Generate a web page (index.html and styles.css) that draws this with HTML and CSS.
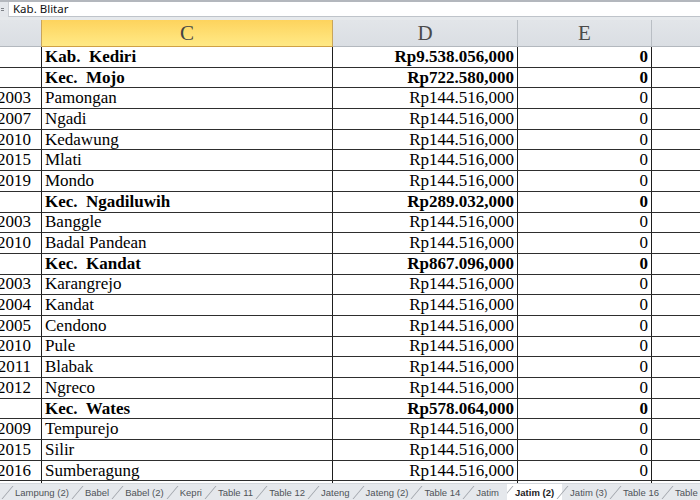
FILE: index.html
```html
<!DOCTYPE html>
<html>
<head>
<meta charset="utf-8">
<link rel="stylesheet" href="styles.css">
</head>
<body>
<div class="app">
  <div class="formula">
    <div class="fx-stub"><span class="fx-mark"></span></div>
    <div class="fbox">Kab. Blitar</div>
  </div>
  <div class="gap"></div>
  <div class="colheads">
    <div class="ch chb"></div>
    <div class="ch chc sel">C</div>
    <div class="ch chd">D</div>
    <div class="ch che">E</div>
    <div class="ch chf"></div>
  </div>
  <div class="sheet">
    <div class="row bold"><div class="cell b"></div><div class="cell c">Kab.&nbsp; Kediri</div><div class="cell d">Rp9.538.056,000</div><div class="cell e">0</div><div class="cell f"></div></div>
    <div class="row bold"><div class="cell b"></div><div class="cell c">Kec.&nbsp; Mojo</div><div class="cell d">Rp722.580,000</div><div class="cell e">0</div><div class="cell f"></div></div>
    <div class="row"><div class="cell b">2003</div><div class="cell c">Pamongan</div><div class="cell d">Rp144.516,000</div><div class="cell e">0</div><div class="cell f"></div></div>
    <div class="row"><div class="cell b">2007</div><div class="cell c">Ngadi</div><div class="cell d">Rp144.516,000</div><div class="cell e">0</div><div class="cell f"></div></div>
    <div class="row"><div class="cell b">2010</div><div class="cell c">Kedawung</div><div class="cell d">Rp144.516,000</div><div class="cell e">0</div><div class="cell f"></div></div>
    <div class="row"><div class="cell b">2015</div><div class="cell c">Mlati</div><div class="cell d">Rp144.516,000</div><div class="cell e">0</div><div class="cell f"></div></div>
    <div class="row"><div class="cell b">2019</div><div class="cell c">Mondo</div><div class="cell d">Rp144.516,000</div><div class="cell e">0</div><div class="cell f"></div></div>
    <div class="row bold"><div class="cell b"></div><div class="cell c">Kec.&nbsp; Ngadiluwih</div><div class="cell d">Rp289.032,000</div><div class="cell e">0</div><div class="cell f"></div></div>
    <div class="row"><div class="cell b">2003</div><div class="cell c">Banggle</div><div class="cell d">Rp144.516,000</div><div class="cell e">0</div><div class="cell f"></div></div>
    <div class="row"><div class="cell b">2010</div><div class="cell c">Badal Pandean</div><div class="cell d">Rp144.516,000</div><div class="cell e">0</div><div class="cell f"></div></div>
    <div class="row bold"><div class="cell b"></div><div class="cell c">Kec.&nbsp; Kandat</div><div class="cell d">Rp867.096,000</div><div class="cell e">0</div><div class="cell f"></div></div>
    <div class="row"><div class="cell b">2003</div><div class="cell c">Karangrejo</div><div class="cell d">Rp144.516,000</div><div class="cell e">0</div><div class="cell f"></div></div>
    <div class="row"><div class="cell b">2004</div><div class="cell c">Kandat</div><div class="cell d">Rp144.516,000</div><div class="cell e">0</div><div class="cell f"></div></div>
    <div class="row"><div class="cell b">2005</div><div class="cell c">Cendono</div><div class="cell d">Rp144.516,000</div><div class="cell e">0</div><div class="cell f"></div></div>
    <div class="row"><div class="cell b">2010</div><div class="cell c">Pule</div><div class="cell d">Rp144.516,000</div><div class="cell e">0</div><div class="cell f"></div></div>
    <div class="row"><div class="cell b">2011</div><div class="cell c">Blabak</div><div class="cell d">Rp144.516,000</div><div class="cell e">0</div><div class="cell f"></div></div>
    <div class="row"><div class="cell b">2012</div><div class="cell c">Ngreco</div><div class="cell d">Rp144.516,000</div><div class="cell e">0</div><div class="cell f"></div></div>
    <div class="row bold"><div class="cell b"></div><div class="cell c">Kec.&nbsp; Wates</div><div class="cell d">Rp578.064,000</div><div class="cell e">0</div><div class="cell f"></div></div>
    <div class="row"><div class="cell b">2009</div><div class="cell c">Tempurejo</div><div class="cell d">Rp144.516,000</div><div class="cell e">0</div><div class="cell f"></div></div>
    <div class="row"><div class="cell b">2015</div><div class="cell c">Silir</div><div class="cell d">Rp144.516,000</div><div class="cell e">0</div><div class="cell f"></div></div>
    <div class="row"><div class="cell b">2016</div><div class="cell c">Sumberagung</div><div class="cell d">Rp144.516,000</div><div class="cell e">0</div><div class="cell f"></div></div>
    <div class="row"><div class="cell b"></div><div class="cell c"></div><div class="cell d"></div><div class="cell e"></div><div class="cell f"></div></div>
  </div>
  <div class="tabs">
    <div class="tab">Lampung (2)</div>
    <div class="tab">Babel</div>
    <div class="tab">Babel (2)</div>
    <div class="tab">Kepri</div>
    <div class="tab">Table 11</div>
    <div class="tab">Table 12</div>
    <div class="tab">Jateng</div>
    <div class="tab">Jateng (2)</div>
    <div class="tab">Table 14</div>
    <div class="tab">Jatim</div>
    <div class="tab active">Jatim (2)</div>
    <div class="tab">Jatim (3)</div>
    <div class="tab">Table 16</div>
    <div class="tab">Table 17</div>
  </div>
</div>
</body>
</html>
```

FILE: styles.css
```css
* { box-sizing: border-box; }
html, body { margin: 0; padding: 0; }
body { width: 700px; height: 500px; overflow: hidden; background: #fff; }

.app { width: 700px; height: 500px; display: flex; flex-direction: column; overflow: hidden; }

.formula {
  height: 17px;
  display: flex;
  border-top: 2px solid #b3b7bd;
  background: #e4e7eb;
}
.fx-stub { width: 8px; display: flex; align-items: center; justify-content: flex-start; padding-left: 1px; }
.fx-mark { width: 3px; height: 3px; border-top: 1px solid #7d8187; border-bottom: 1px solid #7d8187; }
.fbox {
  flex: 1;
  background: #fff;
  border-left: 1px solid #c9cdd2;
  border-bottom: 1px solid #bfc4ca;
  font-family: "Noto Sans", "Liberation Sans", sans-serif;
  font-size: 11.5px;
  line-height: 14px;
  padding-left: 4px;
  color: #111;
}
.gap { height: 3px; background: #e6e9ec; }

.colheads {
  height: 27px;
  display: grid;
  grid-template-columns: 42px 291px 185px 134px 1fr;
}
.ch {
  background: linear-gradient(#e2e5e9, #dadee3);
  border-right: 1px solid #b9bec4;
  border-bottom: 1px solid #b3b8be;
  font-family: "Liberation Serif", serif;
  font-size: 21px;
  color: #4a4a4a;
  display: flex;
  align-items: center;
  justify-content: center;
}
.chb { border-right: 1px solid #c8a55c; }
.ch.sel {
  background: linear-gradient(#fdd35d, #ffe37a 70%, #ffe985);
  border-right: 1px solid #c8a55c;
  border-bottom: 1px solid #d0a145;
  color: #444;
}
.chf { border-right: none; }

.sheet { flex: 1; overflow: hidden; }
.row {
  height: 20.7px;
  display: grid;
  grid-template-columns: 42px 291px 185px 134px 1fr;
  font-family: "Liberation Serif", serif;
  font-size: 17px;
  color: #000;
}
.row.bold { font-weight: bold; }
.cell {
  border-bottom: 1px solid #2e2e2e;
  display: flex;
  align-items: center;
  white-space: nowrap;
  overflow: hidden;
  line-height: 18px;
}
.cell.b { border-right: 1px solid #1e1e1e; justify-content: flex-end; padding-right: 10px; }
.cell.c { border-right: 1px solid #1e1e1e; padding-left: 3px; }
.cell.d { border-right: 1px solid #1e1e1e; justify-content: flex-end; padding-right: 3px; }
.cell.e { border-right: 1px solid #1e1e1e; justify-content: flex-end; padding-right: 3px; }

.tabs {
  height: 17px;
  flex: none;
  display: flex;
  background: #e5e8ec;
  border-top: 1px solid #d3d7dc;
  padding-left: 7px;
  font-family: "Liberation Sans", sans-serif;
  font-size: 9.5px;
  color: #4f5358;
  overflow: hidden;
}
.tab {
  position: relative;
  padding: 0 8px 0 8px;
  display: flex;
  align-items: center;
  white-space: nowrap;
  flex: none;
}
.tab::before {
  content: "";
  position: absolute;
  left: 0;
  top: 2px;
  height: 13px;
  border-left: 1px solid #9da2a8;
  transform: skewX(-40deg);
}
.tab.active {
  background: #fff;
  font-weight: bold;
  color: #222;
  clip-path: polygon(0 0, 100% 0, 100% 100%, 0 100%);
}
```
